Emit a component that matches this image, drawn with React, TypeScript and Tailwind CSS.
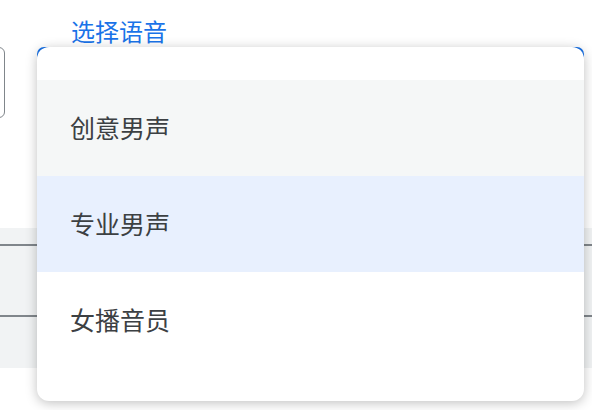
const voices = ['创意男声', '专业男声', '女播音员'];

export default function App() {
  const hovered = 0;
  const selected = 1;

  return (
    <div
      className="relative w-[592px] h-[410px] overflow-hidden bg-white"
      style={{ fontFamily: '"Noto Sans CJK SC", "Noto Sans", sans-serif' }}
    >
      <div className="pt-[17px]">
        <div className="pl-[71px] text-[24px] leading-[28px] text-[#1a73e8]">选择语音</div>

        <div className="mt-[2px] flex items-start">
          <div className="ml-[-100px] h-[71px] w-[105px] shrink-0 rounded-[6px] border border-[#80868b]" />
          <div className="ml-[32px] h-[120px] flex-1 mr-[8px] rounded-[7px] border-2 border-[#1a73e8]" />
        </div>

        <div className="mt-[61px] h-[140px] bg-[#f1f3f4] flex flex-col">
          <div className="h-[16px]" />
          <div className="h-[2px] bg-[#80868b]" />
          <div className="h-[69px]" />
          <div className="h-[2px] bg-[#80868b]" />
        </div>
      </div>

      <div className="absolute left-[37px] top-[47px] w-[547px] rounded-[12px] bg-white py-[33px] shadow-[0_2px_12px_rgba(0,0,0,0.25)] overflow-hidden">
        {voices.map((v, i) => (
          <div
            key={v}
            className={`flex h-[96px] items-center pl-[33px] text-[25px] text-[#3c4043] ${
              i === selected ? 'bg-[#e8f0fe]' : i === hovered ? 'bg-[#f5f7f7]' : 'bg-white'
            }`}
          >
            {v}
          </div>
        ))}
      </div>
    </div>
  );
}
